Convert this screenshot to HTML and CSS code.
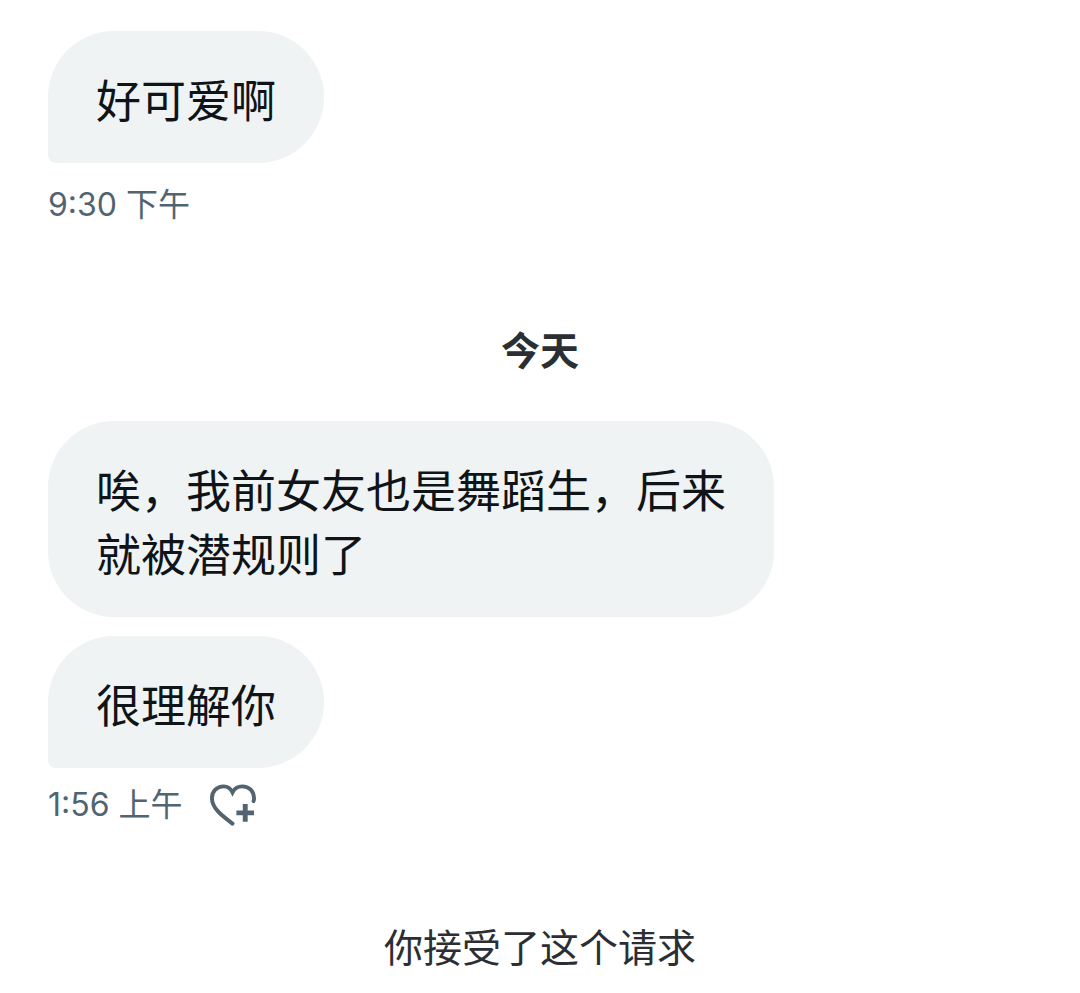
FILE: index.html
```html
<!DOCTYPE html>
<html lang="zh">
<head>
<meta charset="utf-8">
<title>消息</title>
<link rel="stylesheet" href="styles.css">
</head>
<body>
<main class="thread">
  <div class="bubble tail">好可爱啊</div>
  <div class="meta">9:30 下午</div>
  <div class="date">今天</div>
  <div class="bubble">唉，我前女友也是舞蹈生，后来就被潜规则了</div>
  <div class="bubble tail next">很理解你</div>
  <div class="meta close">
    <span>1:56 上午</span>
    <svg class="heart" viewBox="0 0 48 42" width="47" height="42" aria-hidden="true">
      <path d="M24 40 C15 33 3 25 3 14 C3 7 8 2 15 2 C19 2 22 4 24 8 C26 4 30 2 34 2 C41 2 46 7 46 14 C46 15 46 16 45.500 17" fill="none" stroke="#536471" stroke-width="4" stroke-linecap="round"/>
      <path d="M37 20 V38 M28 29 H46" fill="none" stroke="#536471" stroke-width="5"/>
    </svg>
  </div>
  <div class="notice">你接受了这个请求</div>
</main>
</body>
</html>
```
FILE: styles.css
```css
html, body {
  margin: 0;
  padding: 0;
  background: #ffffff;
}
body {
  height: 993px;
  overflow: hidden;
  font-family: "Noto Sans CJK SC", "Noto Sans", sans-serif;
}
.thread {
  display: flex;
  flex-direction: column;
  align-items: flex-start;
  padding: 31px 48px 0;
}
.bubble {
  box-sizing: border-box;
  max-width: 726px;
  padding: 36px 48px 32px;
  background: #eff3f4;
  border-radius: 66px;
  color: #0f1419;
  font-size: 45px;
  line-height: 64px;
}
.tail {
  border-bottom-left-radius: 8px;
}
.next {
  margin-top: 19px;
}
.meta {
  display: flex;
  align-items: center;
  gap: 26px;
  margin-top: 20px;
  height: 44px;
  color: #536471;
  font-family: Inter, "Noto Sans CJK SC", sans-serif;
  font-size: 32px;
  line-height: 44px;
}
.close {
  margin-top: 15px;
}
.heart {
  display: block;
}
.date {
  align-self: stretch;
  margin: 94px 0 46px;
  text-align: center;
  color: #2b2f33;
  font-size: 39px;
  font-weight: 700;
  line-height: 54px;
}
.notice {
  align-self: stretch;
  margin-top: 90px;
  text-align: center;
  color: #2b2f33;
  font-size: 39px;
  line-height: 56px;
}
```
